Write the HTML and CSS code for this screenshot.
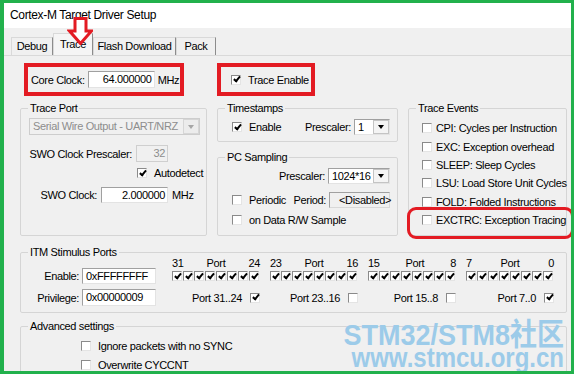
FILE: index.html
```html
<!DOCTYPE html>
<html lang="en">
<head>
  <meta charset="UTF-8" />
  <meta name="viewport" content="width=device-width, initial-scale=1.0" />
  <title>Cortex-M Target Driver Setup</title>
  <link rel="stylesheet" href="styles.css">
</head>
<body>
  <div class="shot">
    <div class="titlebar">Cortex-M Target Driver Setup</div>

    <div class="tabs">
      <span class="tab tab-debug">Debug</span>
      <span class="tab tab-trace">Trace</span>
      <span class="tab tab-flash">Flash Download</span>
      <span class="tab tab-pack">Pack</span>
    </div>

    <!-- red marker over the Trace tab -->
    <svg class="mark-arrow" viewBox="0 0 26 28">
      <path d="M8 1.5 H19 V14 H24.5 L13.5 26.5 L2.5 14 H8 Z" fill="#fff" stroke="#e31b23" stroke-width="3" />
    </svg>

    <div class="panel">
      <div class="top-row">
        <div class="callout clock">
          <span>Core Clock:</span>
          <span class="edit num w-core">64.000000</span>
          <span>MHz</span>
        </div>
        <div class="callout enable">
          <span class="cb on"></span><span>Trace Enable</span>
        </div>
      </div>

      <div class="groups">
        <fieldset class="grp trace-port">
          <legend>Trace Port</legend>
          <div class="tp-body">
            <div class="combo dis"><span class="val">Serial Wire Output - UART/NRZ</span><span class="drop"></span></div>
            <div class="tp-line presc">
              <span class="lbl">SWO Clock Prescaler:</span>
              <span class="edit num dis w-32">32</span>
            </div>
            <div class="autodetect"><span class="cb on"></span><span>Autodetect</span></div>
            <div class="tp-line swo">
              <span class="lbl">SWO Clock:</span>
              <span class="edit num w-swo">2.000000</span>
              <span>MHz</span>
            </div>
          </div>
        </fieldset>

        <div class="col-mid">
          <fieldset class="grp timestamps">
            <legend>Timestamps</legend>
            <div class="row ts">
              <span class="chk"><span class="cb on"></span><span>Enable</span></span>
              <span class="pair"><span>Prescaler:</span><span class="combo w-ts"><span class="val">1</span><span class="drop"></span></span></span>
            </div>
          </fieldset>

          <fieldset class="grp pc">
            <legend>PC Sampling</legend>
            <div class="row pc-presc">
              <span class="pair"><span>Prescaler:</span><span class="combo w-pcp"><span class="val">1024*16</span><span class="drop"></span></span></span>
            </div>
            <div class="row periodic">
              <span class="chk"><span class="cb"></span><span>Periodic</span></span>
              <span class="pair"><span>Period:</span><span class="edit ro w-period">&lt;Disabled&gt;</span></span>
            </div>
            <div class="row rw">
              <span class="chk"><span class="cb"></span><span>on Data R/W Sample</span></span>
            </div>
          </fieldset>
        </div>

        <fieldset class="grp trace-events">
          <legend>Trace Events</legend>
          <div class="ev-list">
            <div class="ev"><span class="cb"></span><span>CPI: Cycles per Instruction</span></div>
            <div class="ev"><span class="cb"></span><span>EXC: Exception overhead</span></div>
            <div class="ev"><span class="cb"></span><span>SLEEP: Sleep Cycles</span></div>
            <div class="ev"><span class="cb"></span><span>LSU: Load Store Unit Cycles</span></div>
            <div class="ev"><span class="cb"></span><span>FOLD: Folded Instructions</span></div>
            <div class="ev flagged"><span class="cb"></span><span>EXCTRC: Exception Tracing</span></div>
          </div>
        </fieldset>
      </div>

      <fieldset class="grp itm">
        <legend>ITM Stimulus Ports</legend>
        <div class="itm-grid">
          <span></span>
          <div class="ph"><span>31</span><span>Port</span><span>24</span></div>
          <div class="ph"><span>23</span><span>Port</span><span>16</span></div>
          <div class="ph"><span>15</span><span>Port</span><span>8</span></div>
          <div class="ph"><span>7</span><span>Port</span><span>0</span></div>

          <div class="itm-field"><span>Enable:</span><span class="edit hex w-hex h16">0xFFFFFFFF</span></div>
          <div class="pc8"><span class="cb on"></span><span class="cb on"></span><span class="cb on"></span><span class="cb on"></span><span class="cb on"></span><span class="cb on"></span><span class="cb on"></span><span class="cb on"></span></div>
          <div class="pc8"><span class="cb on"></span><span class="cb on"></span><span class="cb on"></span><span class="cb on"></span><span class="cb on"></span><span class="cb on"></span><span class="cb on"></span><span class="cb on"></span></div>
          <div class="pc8"><span class="cb on"></span><span class="cb on"></span><span class="cb on"></span><span class="cb on"></span><span class="cb on"></span><span class="cb on"></span><span class="cb on"></span><span class="cb on"></span></div>
          <div class="pc8"><span class="cb on"></span><span class="cb on"></span><span class="cb on"></span><span class="cb on"></span><span class="cb on"></span><span class="cb on"></span><span class="cb on"></span><span class="cb on"></span></div>

          <div class="itm-field low"><span>Privilege:</span><span class="edit hex w-hex">0x00000009</span></div>
          <div class="pb"><span>Port 31..24</span><span class="cb on"></span></div>
          <div class="pb"><span>Port 23..16</span><span class="cb"></span></div>
          <div class="pb"><span>Port 15..8</span><span class="cb"></span></div>
          <div class="pb"><span>Port 7..0</span><span class="cb on"></span></div>
        </div>
      </fieldset>

      <fieldset class="grp adv">
        <legend>Advanced settings</legend>
        <div class="adv-list">
          <div class="opt"><span class="cb"></span><span>Ignore packets with no SYNC</span></div>
          <div class="opt"><span class="cb"></span><span>Overwrite CYCCNT</span></div>
        </div>
      </fieldset>
    </div>

    <div class="watermark">
      <div class="wm1">STM32/STM8社区</div>
      <div class="wm2">www.stmcu.org.cn</div>
    </div>
  </div>
</body>
</html>
```

FILE: styles.css
```css
* { margin: 0; padding: 0; box-sizing: border-box; }
body {
  font-family: 'Liberation Sans', Arial, sans-serif;
  font-size: 11px;
  letter-spacing: -0.35px;
  color: #000;
  background: #fff;
}
.shot {
  position: relative;
  width: 574px;
  height: 374px;
  border: 3px solid #22b14c;
  border-left-width: 4px;
  background: #f0f0f0;
  overflow: hidden;
}
.titlebar {
  height: 25px;
  line-height: 25px;
  padding-left: 6px;
  background: #fff;
  font-size: 12px;
}

/* tabs */
.tabs {
  display: flex;
  align-items: flex-end;
  height: 28px;
  padding-left: 7px;
  border-bottom: 1px solid #d9d9d9;
}
.tab {
  height: 18px;
  line-height: 17px;
  text-align: center;
  border: 1px solid #d9d9d9;
  border-bottom: 0;
  border-right-color: #8c8c8c;
}
.tab-debug { width: 42px; }
.tab-trace { width: 40px; height: 22px; line-height: 20px; background: #f5f5f5; }
.tab-flash { width: 83px; }
.tab-pack { width: 40px; }
.mark-arrow {
  position: absolute;
  left: 63px; top: 14px;
  width: 26px; height: 28px;
}

/* common controls */
.cb {
  position: relative;
  flex: none;
  display: inline-block;
  width: 10px; height: 10px;
  border: 1px solid;
  border-color: #8a8a8a #e4e4e4 #e4e4e4 #8a8a8a;
  background: #fff;
}
.cb.on::after {
  content: "";
  position: absolute;
  left: 2.5px; top: -0.5px;
  width: 2px; height: 5px;
  border: solid #000;
  border-width: 0 2px 2px 0;
  transform: rotate(40deg);
}
.edit {
  display: block;
  flex: none;
  height: 17px;
  line-height: 15px;
  padding: 0 2px;
  border: 1px solid;
  border-color: #a0a0a0 #e3e3e3 #e3e3e3 #a0a0a0;
  background: #fff;
  white-space: nowrap;
}
.num { text-align: right; }
.hex { padding-left: 3px; }
.edit.dis { background: #f0f0f0; color: #8d8d8d; border-color: #cfcfcf; }
.edit.ro { background: #f0f0f0; border-color: #a0a0a0 #d8d8d8 #d8d8d8 #a0a0a0; padding-left: 9px; }
.combo {
  display: flex;
  height: 17px;
  border: 1px solid;
  border-color: #a0a0a0 #e3e3e3 #e3e3e3 #a0a0a0;
  background: #fff;
}
.combo .val {
  flex: 1;
  padding-left: 3px;
  line-height: 15px;
  white-space: nowrap;
  overflow: hidden;
}
.combo .drop {
  width: 16px;
  display: flex;
  align-items: center;
  justify-content: center;
  background: #f4f4f4;
  border: 1px solid #c4c4c4;
}
.combo .drop::before {
  content: "";
  border-left: 3.5px solid transparent;
  border-right: 3.5px solid transparent;
  border-top: 4px solid #000;
}
.combo.dis { background: #f0f0f0; color: #8d8d8d; border-color: #cdcdcd; }
.combo.dis .drop { background: #ececec; border-color: #d6d6d6; }
.combo.dis .drop::before { border-top-color: #a6a6a6; }

/* panel */
.panel { padding: 0 4px 0 16px; }
.top-row {
  display: flex;
  gap: 33px;
  padding: 7px 0 0 4px;
}
.callout {
  display: flex;
  align-items: center;
  height: 33px;
  border: 4px solid #e31b23;
  white-space: nowrap;
}
.clock { width: 160px; padding-left: 3px; gap: 3px; }
.w-core { width: 67px; }
.enable { width: 98px; padding-left: 10px; gap: 7px; }

.grp {
  border: 1px solid #d5d5d5;
  border-radius: 2px;
  min-width: 0;
}
.grp legend {
  margin-left: 7px;
  padding: 0 2px;
  line-height: 12px;
}
.groups {
  display: flex;
  gap: 10px;
  height: 134px;
  margin-top: 6px;
}

/* trace port */
.trace-port { width: 187px; }
.tp-body { padding: 4px 6px 0 8px; }
.tp-line {
  display: grid;
  grid-template-columns: 1fr auto 30px;
  column-gap: 4px;
  align-items: center;
  width: 173px;
}
.tp-line .lbl { text-align: right; white-space: nowrap; }
.presc { margin-top: 10px; }
.w-32 { width: 32px; }
.autodetect {
  display: flex;
  align-items: center;
  gap: 7px;
  height: 10px;
  margin-top: 6px;
  padding-left: 108px;
}
.swo { margin-top: 9px; }
.w-swo { width: 67px; height: 16px; }

/* timestamps / pc sampling */
.col-mid {
  display: flex;
  flex-direction: column;
  gap: 9px;
  width: 181px;
}
.timestamps { height: 40px; }
.pc { flex: 1; }
.row {
  display: flex;
  align-items: center;
  justify-content: space-between;
  padding: 0 7px 0 14px;
}
.chk { display: flex; align-items: center; gap: 7px; }
.pair { display: flex; align-items: center; gap: 3px; }
.ts { height: 16px; margin-top: 5px; }
.w-ts { width: 36px; height: 16px; }
.pc-presc { height: 16px; margin-top: 5px; justify-content: flex-end; }
.w-pcp { width: 62px; height: 16px; }
.periodic { height: 16px; margin-top: 8px; }
.w-period { width: 61px; height: 16px; }
.rw { height: 12px; margin-top: 6px; justify-content: flex-start; }

/* trace events */
.trace-events { width: 159px; }
.ev-list { padding: 5px 0 0 13px; }
.ev {
  position: relative;
  display: flex;
  align-items: center;
  gap: 4px;
  height: 18.4px;
  white-space: nowrap;
}
.ev.flagged::after {
  content: "";
  position: absolute;
  left: -15px; right: -8px;
  top: -4px; bottom: -10px;
  border: 3px solid #e31b23;
  border-radius: 9px;
}

/* ITM */
.itm { margin-top: 10px; }
.itm-grid {
  display: grid;
  grid-template-columns: 141px repeat(4, 88px);
  grid-template-rows: 10px 16px 22px;
  column-gap: 10px;
  padding-bottom: 6px;
}
.ph {
  display: flex;
  justify-content: space-between;
  line-height: 10px;
}
.pc8 { display: flex; align-items: center; gap: 1px; }
.itm-field {
  display: flex;
  align-items: center;
  justify-content: flex-end;
  gap: 3px;
  padding-right: 6px;
}
.itm-field.low { align-self: end; height: 17px; }
.w-hex { width: 74px; }
.h16 { height: 16px; }
.pb {
  display: flex;
  align-items: center;
  justify-content: flex-end;
  gap: 8px;
  height: 17px;
  align-self: end;
}

/* advanced */
.adv { margin-top: 7px; height: 70px; }
.adv-list { padding: 4px 0 0 60px; }
.opt { display: flex; align-items: center; gap: 7px; height: 19px; }

/* site watermark */
.watermark {
  position: absolute;
  right: 7px; top: 318px;
  color: #9ccbe9;
  font-weight: bold;
  letter-spacing: 0;
  text-align: right;
  transform: scaleY(1.12);
  transform-origin: top right;
}
.wm1 {
  font-family: 'Liberation Sans', 'Noto Sans CJK SC', sans-serif;
  font-size: 27px;
  line-height: 24px;
}
.wm2 { font-size: 24px; line-height: 18px; }
```
